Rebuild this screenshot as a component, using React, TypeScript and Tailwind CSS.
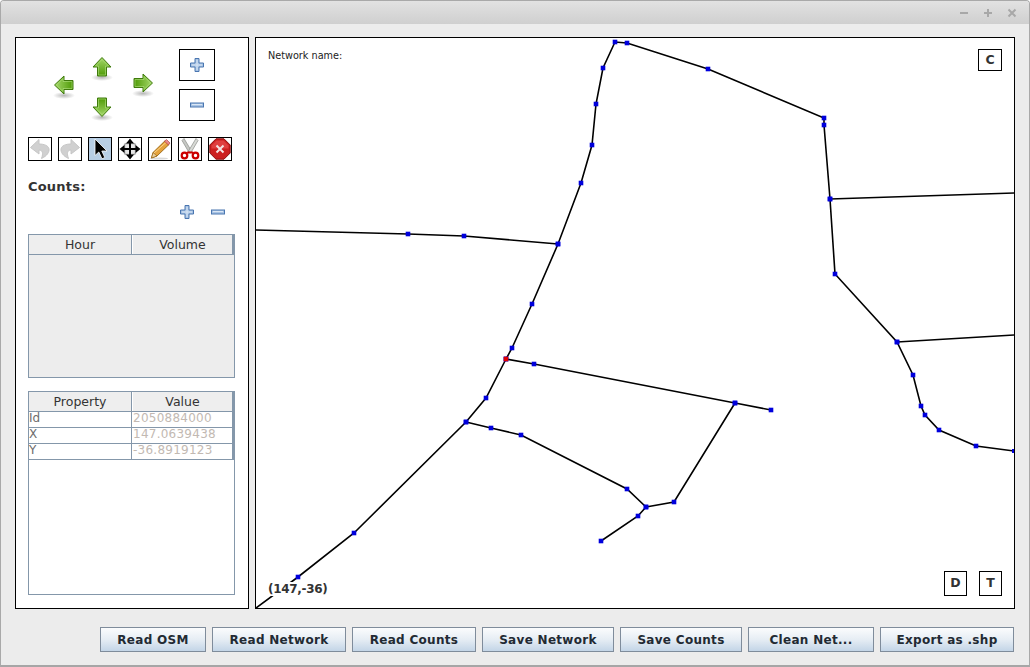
import React from "react";

const font = { fontFamily: '"DejaVu Sans", sans-serif' };

const main: [number, number][] = [[256,608],[298,577],[354,533],[466,422],[486,398],[506,359],[512,348],[532,304],[558,244],[581,183],[592,145],[596,104],[603,68],[615,42],[627,43],[708,69],[824,118],[824,125],[830,199],[835,274],[897,342],[913,375],[921,406],[925,415],[939,430],[976,446],[1014,451]];
const lines: [number, number][][] = [
  main,
  [[256,230],[408,234],[464,236],[558,244]],
  [[830,199],[1014,193]],
  [[897,342],[1014,335]],
  [[506,359],[534,364],[735,403],[771,410]],
  [[466,422],[491,428],[521,435],[627,489],[646,507],[638,516],[601,541]],
  [[646,507],[674,502],[735,403]],
];

function Plus({ className }: { className?: string }) {
  return (
    <svg width="16" height="16" viewBox="0 0 16 16" className={className}>
      <path d="M6 1.500h4v4.500h4.500v4H10v4.500H6V10H1.500V6H6z" fill="#a9c4e4" stroke="#4a76b0" />
      <path d="M8 3v10M3 8h10" stroke="#dbe7f5" strokeWidth="1" />
    </svg>
  );
}
function Minus({ className }: { className?: string }) {
  return (
    <svg width="16" height="16" viewBox="0 0 16 16" className={className}>
      <rect x="1.500" y="6" width="13" height="4" fill="#a9c4e4" stroke="#4a76b0" />
      <path d="M3 7.500h10" stroke="#dbe7f5" />
    </svg>
  );
}
function Arrow({ rot }: { rot: number }) {
  return (
    <svg width="22" height="26" viewBox="0 0 22 26" className="block">
      <defs>
        <linearGradient id="ag" x1="0" y1="0" x2="0" y2="1">
          <stop offset="0" stopColor="#a5d86a" />
          <stop offset="1" stopColor="#4e9a06" />
        </linearGradient>
        <radialGradient id="as">
          <stop offset="0" stopColor="#000" stopOpacity="0.28" />
          <stop offset="1" stopColor="#000" stopOpacity="0" />
        </radialGradient>
      </defs>
      <ellipse cx="11" cy="21.500" rx="11" ry="3.500" fill="url(#as)" />
      <g transform={`rotate(${rot} 11 11)`}>
        <path d="M11 1.500 L20 11 H15.500 V20 H6.500 V11 H2 Z" fill="url(#ag)" stroke="#3f7a0c" strokeWidth="1" />
        <path d="M11 3.500 L17.500 10 H14.500 V19 H7.500 V10 H4.500 Z" fill="none" stroke="#b5e287" strokeOpacity="0.7" strokeWidth="0.8" />
      </g>
    </svg>
  );
}

function Undo({ flip }: { flip?: boolean }) {
  return (
    <svg width="22" height="22" viewBox="0 0 22 22" style={flip ? { transform: "scaleX(-1)" } : undefined}>
      <path d="M10 1.500 L1.500 9.500 L10 16 V12 C13.500 12 14.500 15 12.500 20.500 C18 18 20.500 14 20 11 C19.500 7.500 15 6 10 6 Z" fill="#d0d0d0" stroke="#c6c6c6" />
    </svg>
  );
}
function Cursor() {
  return (
    <svg width="22" height="22" viewBox="0 0 22 22">
      <path d="M6 1 V17.500 L9.800 14 L13 20.800 L15.800 19.500 L12.800 13 H18 Z" fill="#000" stroke="#fff" strokeWidth="0.8" />
    </svg>
  );
}
function Move() {
  return (
    <svg width="22" height="22" viewBox="0 0 22 22">
      <rect x="5.500" y="5.500" width="11" height="11" rx="2" fill="#e8e8e8" stroke="#aaaaaa" strokeWidth="1.500" />
      <path d="M11 .500 L15 5.500 H12 V10 H16.500 V7 L21.500 11 L16.500 15 V12 H12 V16.500 H15 L11 21.500 L7 16.500 H10 V12 H5.500 V15 L.500 11 L5.500 7 V10 H10 V5.500 H7 Z" fill="#000" />
    </svg>
  );
}
function Pencil() {
  return (
    <svg width="22" height="22" viewBox="0 0 22 22">
      <ellipse cx="10" cy="20.500" rx="9" ry="1" fill="#000" opacity="0.15" />
      <path d="M2.500 20 L4 14.500 L16 2.800 L20 6.500 L8 18 Z" fill="#e5a33c" stroke="#8f5902" strokeWidth="0.8" />
      <path d="M5 15 L17 4.500" stroke="#fbd38a" />
      <path d="M2.500 20 L4 14.500 L8 18 Z" fill="#e9cfa0" stroke="#8f5902" strokeWidth="0.6" />
      <path d="M15.500 3.300 L17.500 1.500 L21 5 L19.500 7 Z" fill="#e98a8a" stroke="#a33" strokeWidth="0.6" />
    </svg>
  );
}
function Scissors() {
  return (
    <svg width="22" height="22" viewBox="0 0 22 22">
      <path d="M5 .500 L12.500 13 L10 14.500 L3 2.500 Z" fill="#c6c8c4" stroke="#8a8c88" strokeWidth="0.7" />
      <path d="M17 .500 L9.500 13 L12 14.500 L19 2.500 Z" fill="#d8dad6" stroke="#8a8c88" strokeWidth="0.7" />
      <circle cx="5.500" cy="17.500" r="2.800" fill="#fff" stroke="#cc0000" strokeWidth="2.200" />
      <circle cx="16.500" cy="17.500" r="2.800" fill="#fff" stroke="#cc0000" strokeWidth="2.200" />
      <path d="M8 14.500 L14 14.500" stroke="#cc0000" strokeWidth="2" />
    </svg>
  );
}
function Stop() {
  return (
    <svg width="22" height="22" viewBox="0 0 22 22">
      <path d="M7 .800h8L21.200 7v8L15 21.200H7L.800 15V7z" fill="#cc1f1f" stroke="#8a0f0f" />
      <path d="M7.500 2.500h7L19.500 7.500v3H2.500v-3z" fill="#ef5a5a" opacity="0.55" />
      <path d="M7.500 7.500l7 7M14.500 7.500l-7 7" stroke="#f4e4e4" strokeWidth="2" />
    </svg>
  );
}
function Tool({ active, children }: { active?: boolean; children: React.ReactNode }) {
  return (
    <div className={`w-6 h-6 border border-black flex items-center justify-center ${active ? "bg-[#b8cfe5]" : "bg-white"}`}>
      {children}
    </div>
  );
}

function Header({ a, b }: { a: string; b: string }) {
  return (
    <div className="flex h-5 shrink-0 border-b border-[#8497aa] text-[#333333] text-[12.500px] leading-[19px] bg-[#eeeeee] border-r-2 border-r-[#8497aa]">
      <div className="w-[103px] text-center border-r border-[#8497aa]">{a}</div>
      <div className="flex-1 text-center border-l border-white">{b}</div>
    </div>
  );
}
function Row({ a, b }: { a: string; b: string }) {
  return (
    <div className="flex h-4 shrink-0 border-b border-[#8497aa] border-r-2 border-r-[#8497aa] text-[12px] leading-[13px] bg-white">
      <div className="w-[103px] text-[#6d6d6d] border-r border-[#8497aa]">{a}</div>
      <div className="flex-1 pl-[1px] text-[#c2b9b2] tracking-[0.25px]">{b}</div>
    </div>
  );
}
function Btn({ w, children }: { w: string; children: string }) {
  return (
    <button className={`${w} h-[25px] border border-[#7f8c9b] bg-gradient-to-b from-[#fbfcfd] via-[#e6edf4] to-[#c3d5e7] text-[#222a33] text-[12px] font-bold tracking-[0.3px]`}>
      {children}
    </button>
  );
}
function Box({ w, h, children }: { w: string; h: string; children: string }) {
  return (
    <div className={`${w} ${h} border border-black bg-white flex items-center justify-center text-[12.500px] font-bold text-[#333333]`}>
      {children}
    </div>
  );
}

export default function App() {
  return (
    <div style={font} className="w-[1030px] h-[667px] bg-[#ececec] flex flex-col overflow-hidden rounded-t-[4px] border border-[#a9a9a9] border-b-2 border-b-[#a6a6a6]">
      <div className="h-[23px] shrink-0 bg-gradient-to-b from-[#e2e2e2] to-[#cfcfcf] flex items-center justify-end gap-[12px] pr-[11px]">
        <svg width="12" height="12" viewBox="0 0 12 12"><path d="M2 6h8" stroke="#a8a8a8" strokeWidth="2" /></svg>
        <svg width="12" height="12" viewBox="0 0 12 12"><path d="M2 6h8M6 2v8" stroke="#a8a8a8" strokeWidth="2" /></svg>
        <svg width="12" height="12" viewBox="0 0 12 12"><path d="M2.500 2.500l7 7M9.500 2.500l-7 7" stroke="#a8a8a8" strokeWidth="2" /></svg>
      </div>
      <div className="flex flex-1 min-h-0 flex-col pt-[13px] pl-[14px] pr-[14px]">
        <div className="flex gap-[6px] h-[572px] shrink-0">
          {/* left panel */}
          <div className="w-[234px] shrink-0 bg-white border border-black flex flex-col pl-3 pt-[11px]">
            <div className="flex h-[72px] shrink-0">
              <div className="w-[151px] flex items-start">
                <div className="ml-[25px] mt-[25px]"><Arrow rot={-90} /></div>
                <div className="ml-[16px] mt-[7px] flex flex-col gap-[14px]">
                  <Arrow rot={0} />
                  <Arrow rot={180} />
                </div>
                <div className="ml-[19px] mt-[23px]"><Arrow rot={90} /></div>
              </div>
              <div className="flex flex-col gap-2">
                <div className="w-9 h-8 border border-black flex items-center justify-center"><Plus /></div>
                <div className="w-9 h-8 border border-black flex items-center justify-center"><Minus /></div>
              </div>
            </div>
            <div className="flex gap-[6px] mt-[16px] shrink-0">
              <Tool><Undo /></Tool>
              <Tool><Undo flip /></Tool>
              <Tool active><Cursor /></Tool>
              <Tool><Move /></Tool>
              <Tool><Pencil /></Tool>
              <Tool><Scissors /></Tool>
              <Tool><Stop /></Tool>
            </div>
            <div className="mt-[17px] text-[13px] leading-[17px] font-bold text-[#333333] tracking-[0.2px] shrink-0">Counts:</div>
            <div className="flex gap-[15px] pl-[151px] mt-[9px] h-[16px] shrink-0">
              <Plus />
              <Minus />
            </div>
            <div className="mt-[14px] w-[207px] h-[144px] shrink-0 border border-[#8497aa] bg-[#ededed] flex flex-col">
              <Header a="Hour" b="Volume" />
            </div>
            <div className="mt-[13px] w-[207px] h-[204px] shrink-0 border border-[#8497aa] bg-white flex flex-col">
              <Header a="Property" b="Value" />
              <Row a="Id" b="2050884000" />
              <Row a="X" b="147.0639438" />
              <Row a="Y" b="-36.8919123" />
            </div>
          </div>
          {/* map */}
          <div className="relative w-[760px] h-[572px] shrink-0 bg-white border border-black overflow-hidden">
            <svg width="758" height="570" viewBox="256 38 758 570" className="block">
              {lines.map((l, i) => (
                <polyline key={i} points={l.map((p) => p.join(",")).join(" ")} fill="none" stroke="#000" strokeWidth="1.600" />
              ))}
              {lines.flatMap((l, i) =>
                l
                  .filter((p) => p[0] > 257 && p[0] < 1014 && p[1] < 607)
                  .map((p, j) => <rect key={`${i}-${j}`} x={p[0] - 2.3} y={p[1] - 2.3} width="4.600" height="4.600" fill="#0000dc" />)
              )}
              <rect x="503.700" y="356.700" width="4.600" height="4.600" fill="#e00000" />
              <rect x="1012" y="449" width="3" height="4" fill="#0000dc" />
            </svg>
            <div className="absolute left-[12px] top-[12px] text-[9.700px] leading-[12px] text-[#222222]">Network name:</div>
            <div className="absolute left-[12px] bottom-[12px] bg-white text-[12px] leading-[14px] font-bold text-[#333333] tracking-[-0.3px]">(147,-36)</div>
            <div className="absolute right-[12px] top-[11px]"><Box w="w-6" h="h-[22px]">C</Box></div>
            <div className="absolute right-[47px] bottom-[12px]"><Box w="w-[23px]" h="h-[25px]">D</Box></div>
            <div className="absolute right-[12px] bottom-[12px]"><Box w="w-[23px]" h="h-[25px]">T</Box></div>
          </div>
        </div>
        <div className="flex gap-[6px] pl-[85px] mt-[18px]">
          <Btn w="w-[106px]">Read OSM</Btn>
          <Btn w="w-[134px]">Read Network</Btn>
          <Btn w="w-[124px]">Read Counts</Btn>
          <Btn w="w-[132px]">Save Network</Btn>
          <Btn w="w-[122px]">Save Counts</Btn>
          <Btn w="w-[126px]">Clean Net...</Btn>
          <Btn w="w-[134px]">Export as .shp</Btn>
        </div>
      </div>
    </div>
  );
}
